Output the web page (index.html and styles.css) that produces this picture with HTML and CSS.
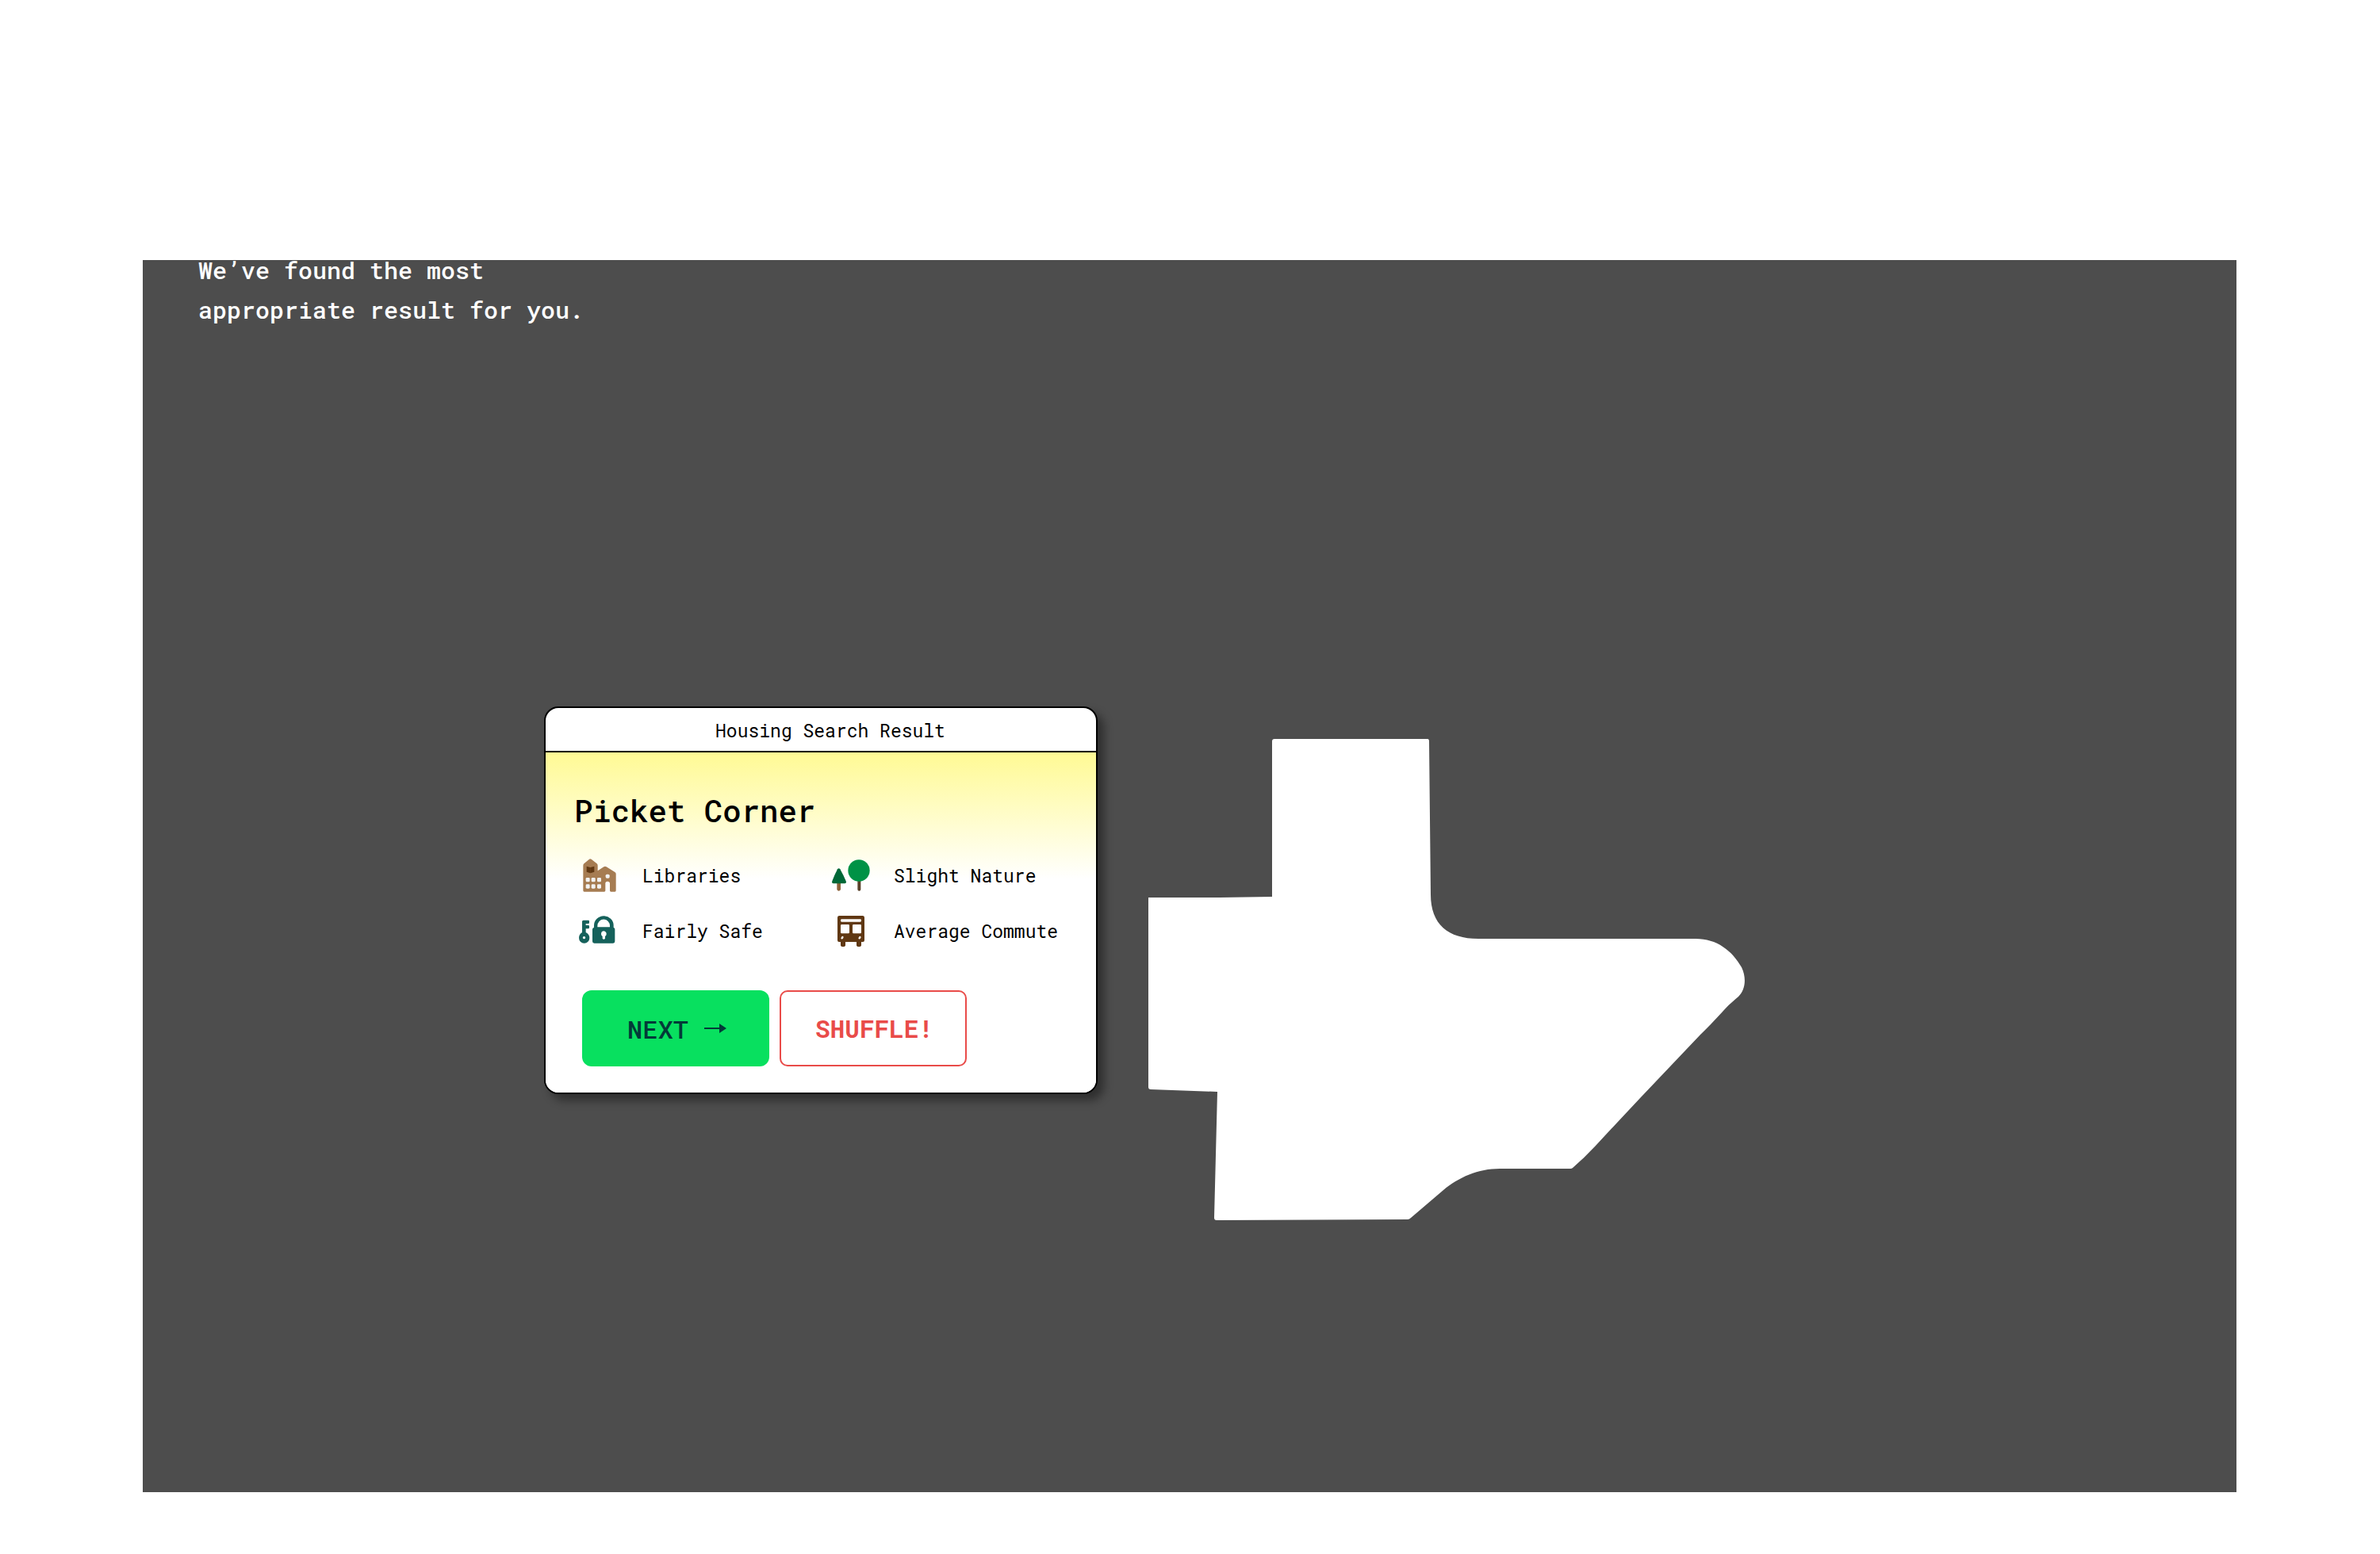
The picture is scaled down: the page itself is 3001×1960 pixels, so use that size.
FILE: index.html
```html
<!DOCTYPE html>
<html lang="en">
<head>
<meta charset="utf-8">
<title>Housing Search Result</title>
<link rel="stylesheet" href="styles.css">
</head>
<body>
<main class="panel">
  <p class="message">We’ve found the most appropriate result for you.</p>
  <div class="stage">
    <section class="card">
      <header class="card-header">Housing Search Result</header>
      <div class="card-body">
        <h1 class="card-title">Picket Corner</h1>
        <ul class="features">
          <li class="feature">
            <span class="feature-icon">
              <svg width="42" height="42" viewBox="0 0 126 126" aria-hidden="true">
                <path fill="#a67c52" d="M1 26 Q1 22 4 19 L24 2 Q28 -1 32 2 L53 19 Q56 22 56 26 V46 L79 31 Q84 28 89 31 L120 50 Q125 53 125 57 V121 Q125 125 121 125 H106 Q102 125 102 121 V94 Q102 86 93 86 Q85 86 85 94 V121 Q85 125 81 125 H5 Q1 125 1 121 Z"/>
                <path fill="#603813" d="M14 29 L28 33 L43 29 V50 L28 55 L14 50 Z"/>
                <path stroke="#8a5a2c" stroke-width="1" d="M28 34 V54"/>
                <g fill="#f2f2f2"><rect x="11" y="72" width="15" height="16" rx="4"/><rect x="32" y="72" width="15" height="16" rx="4"/><rect x="54" y="72" width="15" height="16" rx="4"/><rect x="11" y="97" width="15" height="16" rx="4"/><rect x="32" y="97" width="15" height="16" rx="4"/><rect x="54" y="97" width="15" height="16" rx="4"/><rect x="86" y="59" width="15" height="15" rx="5"/></g>
              </svg>
            </span>
            <span>Libraries</span>
          </li>
          <li class="feature">
            <span class="feature-icon">
              <svg width="48" height="40" viewBox="0 0 144 120" aria-hidden="true">
                <path stroke="#8c6239" stroke-width="14" stroke-linecap="round" d="M26 88 V112"/>
                <path stroke="#594129" stroke-width="12" stroke-linecap="round" d="M103 78 V113"/>
                <path fill="#006837" d="M21 37 Q26 30 31 37 Q43 58 53 82 Q56 91 47 91 H7 Q-2 91 1 82 Q10 58 21 37 Z"/>
                <circle cx="102" cy="42" r="41" fill="#009245"/>
              </svg>
            </span>
            <span>Slight Nature</span>
          </li>
          <li class="feature">
            <span class="feature-icon">
              <svg width="53" height="39" viewBox="0 0 159 117" aria-hidden="true">
                <g fill="#15615b">
                  <path fill-rule="evenodd" d="M12 63 V22 Q12 17 17 17 H36 Q39 17 39 21 V26 Q39 30 35 30 H26 V36 H36 Q39 36 39 40 V45 Q39 49 35 49 H26 V63 Q40 70 40 84 A20 20 0 0 1 0 84 Q0 70 12 63 Z M19 78 a5 5 0 1 0 1 0 Z"/>
                  <path fill-rule="evenodd" d="M57 44 V37 A37 36 0 0 1 131 37 V44 Q136 46 136 51 V97 Q136 104 129 104 H58 Q51 104 51 97 V51 Q51 46 57 44 Z M70 43 H117 V38 A23 24 0 0 0 70 38 Z M94 58 Q84 59 84 69 Q84 75 89 78 V86 Q94 92 99 86 V78 Q104 75 104 69 Q104 59 94 58 Z"/>
                </g>
              </svg>
            </span>
            <span>Fairly Safe</span>
          </li>
          <li class="feature">
            <span class="feature-icon">
              <svg width="34" height="39" viewBox="0 0 102 117" aria-hidden="true">
                <path fill="#603813" d="M7 0 H95 Q102 0 102 7 V93 Q102 99 96 99 H90 V111 Q90 117 81 117 Q72 117 72 111 V99 H30 V111 Q30 117 21 117 Q12 117 12 111 V99 H6 Q0 99 0 93 V7 Q0 0 7 0 Z"/>
                <g fill="#fff"><rect x="12" y="13" width="78" height="10" rx="4"/><rect x="12" y="33" width="33" height="34" rx="4"/><rect x="57" y="33" width="33" height="34" rx="4"/><ellipse cx="18" cy="83" rx="4" ry="6" transform="rotate(35 18 83)"/><ellipse cx="84" cy="83" rx="4" ry="6" transform="rotate(35 84 83)"/></g>
              </svg>
            </span>
            <span>Average Commute</span>
          </li>
        </ul>
        <div class="actions">
          <button class="button button-next" type="button">NEXT
            <svg width="28" height="12" viewBox="0 0 28 12" aria-hidden="true"><path fill="currentColor" d="M0 5 H19 V0 L28 6 L19 12 V7 H0 Z"/></svg>
          </button>
          <button class="button button-shuffle" type="button">SHUFFLE!</button>
        </div>
      </div>
    </section>
    <svg class="map" width="752" height="607" viewBox="0 0 752 607" role="img" aria-label="Map of Picket Corner">
      <path fill="#fff" d="M159 0 H352 Q354 0 354 3 L356 196 C356 234 378 252 416 252 H690 C717 252 736 267 748 288 C755 303 752 317 744 325 C738 330 730 337 724 344 C714 355 704 365 696 373 L620 453 Q590 485 564 513 Q550 528 535 541 Q534 542 532 542 H443 C416 542 391 553 372 569 L331 604 Q329 606 327 606 L86 607 Q83 607 83 604 L87 445 L3 442 Q0 442 0 439 V200 H90 L156 199 V3 Q156 0 159 0 Z"/>
    </svg>
  </div>
</main>
</body>
</html>
```
FILE: styles.css
```css
* {
  box-sizing: border-box;
}

body {
  margin: 0;
  padding: 328px 181px 78px 180px;
  background: #fff;
  color: #000;
  font-family: "Roboto Mono", "DejaVu Sans Mono", monospace;
}

.panel {
  display: flow-root;
  padding: 0 70px 343px;
  background: #4d4d4d;
}

.message {
  max-width: 500px;
  margin: -12px 0 475px;
  color: #fff;
  font-size: 30px;
  font-weight: 500;
  line-height: 50px;
}

.stage {
  display: flex;
  justify-content: center;
  align-items: flex-start;
  gap: 64px;
  padding-right: 114px;
}

.card {
  flex: 0 1 698px;
  overflow: hidden;
  border: 2px solid #000;
  border-radius: 18px;
  background: #fff;
  box-shadow: 8px 8px 12px rgba(0, 0, 0, 0.4);
}

.card-header {
  padding: 2px 0 0 24px;
  border-bottom: 2px solid #000;
  font-size: 23px;
  line-height: 52px;
  text-align: center;
}

.card-body {
  padding: 49px 36px 33px;
  background: linear-gradient(#fffa94, #fff 160px);
}

.card-title {
  margin: 0 0 36px;
  font-size: 39px;
  font-weight: 500;
  line-height: 48px;
}

.features {
  display: grid;
  grid-template-columns: 317px 1fr;
  row-gap: 26px;
  margin: 0 0 53px;
  padding: 0;
  list-style: none;
  font-size: 23px;
}

.feature {
  display: flex;
  align-items: center;
  gap: 22px;
  height: 44px;
  white-space: nowrap;
}

.feature-icon {
  display: flex;
  flex: none;
  justify-content: center;
  width: 64px;
}

.actions {
  display: flex;
  gap: 13px;
  padding-left: 10px;
}

.button {
  display: flex;
  justify-content: center;
  align-items: center;
  gap: 20px;
  width: 236px;
  height: 96px;
  padding: 0 0 0 3px;
  border: 0;
  border-radius: 12px;
  font-family: inherit;
  cursor: pointer;
}

.button-next {
  background: #08e05f;
  color: #033a38;
  font-size: 32px;
  font-weight: 500;
}

.button-shuffle {
  border: 2px solid #e94b49;
  border-radius: 10px;
  background: #fff;
  color: #e94b49;
  font-size: 31px;
  font-weight: 700;
}

.map {
  flex: none;
  margin-top: 41px;
}
```
